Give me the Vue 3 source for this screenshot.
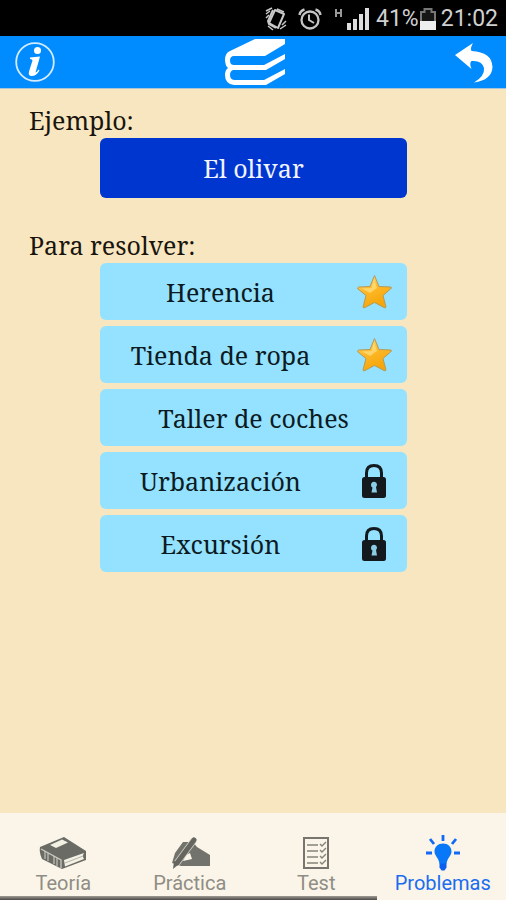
<script setup>
import { ref } from 'vue'

const problems = [
  { name: 'Herencia', state: 'star' },
  { name: 'Tienda de ropa', state: 'star' },
  { name: 'Taller de coches', state: 'open' },
  { name: 'Urbanización', state: 'lock' },
  { name: 'Excursión', state: 'lock' },
]
const tabs = ['Teoría', 'Práctica', 'Test', 'Problemas']
const current = ref('Problemas')
</script>

<template>
  <div class="screen">
    <div class="status">
      <svg width="22" height="24" viewBox="0 0 22 24" fill="none" stroke="#c9c9c9">
        <path d="M10 3 19 7 13 21 4 16Z" stroke-width="2" stroke-linejoin="round" />
        <path d="M8 3 3 14 4 17 11 21" stroke-width="2" />
        <path d="M7 1 1 4M5 4 1 7M4 8 1 11M21 14 17 18M21 18 15 22M3 19 8 23M12 2 19 5" stroke-width="1.500" />
      </svg>
      <svg class="alarm" width="24" height="24" viewBox="0 0 24 24" fill="none" stroke="#c4c4c4">
        <circle cx="12" cy="13" r="8.500" stroke-width="2.300" />
        <path d="M11 7.500V13L16 16" stroke-width="2" />
        <path d="M1.500 8Q2 4 6.500 2.500M22.500 8Q22 4 17.500 2.500" stroke-width="2.400" />
      </svg>
      <svg class="signal" width="36" height="24" viewBox="0 0 36 24">
        <path d="M2 2V10M7 2V10M2 6H7" fill="none" stroke="#999" stroke-width="2" />
        <path d="M13 16h4v7h-4zM19 12h4v11h-4zM25 7h4v16h-4zM31 1h4v22h-4z" fill="#ddd" />
      </svg>
      <span>41%</span>
      <svg width="18" height="24" viewBox="0 0 18 24">
        <path d="M5.500 2h7v3H16v17H2V5h3.500z" fill="#161616" stroke="#777" stroke-width="2" />
        <path d="M1 14h16v9H1z" fill="#eee" />
      </svg>
      <span class="clock">21:02</span>
    </div>

    <header class="bar">
      <button class="plain" aria-label="Información">
        <svg width="42" height="42" viewBox="0 0 42 42">
          <circle cx="21" cy="21" r="18.800" fill="none" stroke="#d5ecff" stroke-width="1.800" />
          <circle cx="23.500" cy="9.500" r="3.500" fill="#fff" />
          <path d="M16 16.500 26 15.500 21.500 31.500Q23 31 24.500 28.500L25.500 29.500Q22 35.500 17 35Q14 34.500 15 30.500L18.500 19.500Q18.500 18 16 18Z" fill="#fff" />
        </svg>
      </button>
      <svg width="62" height="48" viewBox="0 0 62 48">
        <path
          d="M6 13 31 1H61V6L41 18H10Q6 18 6 22.500Q6 27 10 27H40L61 16V21L42 32H9Q6 33 6 37Q6 42 11 42H40L61 31V36L42 47H10Q1 46 1 37Q1 32 4 30Q1 27 1 22Q1 15 6 13Z"
          fill="#fff"
        />
      </svg>
      <button class="plain" aria-label="Volver">
        <svg width="40" height="42" viewBox="0 0 40 42">
          <path d="M1 14 19 2Q16 7 17.500 10Q38 11 38.500 26Q38 39 20 41.500Q31 35 30 27Q28 19 17.500 20Q15 22 17.500 28Z" fill="#fff" />
        </svg>
      </button>
    </header>

    <main class="content">
      <h2>Ejemplo:</h2>
      <button class="example">El olivar</button>
      <h2 class="second">Para resolver:</h2>
      <ul class="list">
        <li v-for="p in problems" :key="p.name">
          <button class="problem" :class="{ full: p.state === 'open' }">
            <span>{{ p.name }}</span>
            <svg v-if="p.state === 'star'" width="36" height="36" viewBox="0 0 36 36">
              <defs>
                <linearGradient id="gold" x1="0" y1="0" x2="0.400" y2="1">
                  <stop offset="0" stop-color="#ffe071" />
                  <stop offset="0.500" stop-color="#fdb827" />
                  <stop offset="1" stop-color="#f5a60a" />
                </linearGradient>
              </defs>
              <path d="M18.500 1.500 23 12.500 35 13Q36 14 34.500 15L27 21.500 30 33Q29.500 34.500 28 33.500L18.500 28.500 9 33.500Q7 34.500 7 33L10 21.500 2 15Q1 13.500 2.500 13L14 12.500Z" fill="url(#gold)" stroke="#b39a5c" stroke-width="1" stroke-linejoin="round" />
              <path d="M18 5 15.500 14 6 14.500 14 19 21 14Z" fill="#ffe48c" opacity="0.650" />
            </svg>
            <svg v-else-if="p.state === 'lock'" width="26" height="36" viewBox="0 0 26 36">
              <path d="M5.500 16V10Q5.500 2.500 13 2.500T20.500 10V16" fill="none" stroke="#14191d" stroke-width="3" />
              <rect x="1" y="14" width="24" height="21" rx="2.500" fill="#14191d" />
              <path d="M10 22a3 3 0 1 1 5 2l1 5.500h-5.500l1-5Q10 24 10 22" fill="#8bcde5" />
            </svg>
          </button>
        </li>
      </ul>
    </main>

    <nav class="tabs">
      <button v-for="t in tabs" :key="t" class="tab" :class="{ active: t === current }" @click="current = t">
        <svg v-if="t === 'Teoría'" width="48" height="36" viewBox="0 0 48 36">
          <path d="M1 12 25 2 47 16V25L23 34 3 24Q0 17 1 12Z" fill="#6b6b66" />
          <path d="M11 10 23 4.500 29 7.500 17 13Z" fill="#f3f0e4" />
          <path d="M25 25 45 18Q43 21 45 24L26 31.500Z" fill="#f3f0e4" />
          <path d="M2 14 22 25V33" fill="none" stroke="#c9c6bc" stroke-width="1.300" />
          <path d="M6 16V24M9 18V26M15 21V29M18 23V31" fill="none" stroke="#d8d5ca" stroke-width="1" />
          <path d="M26 28 44 21" stroke="#b5b3aa" stroke-width="1" />
        </svg>
        <svg v-else-if="t === 'Práctica'" width="42" height="36" viewBox="0 0 42 36">
          <path d="M14 7 24 7 28 12 41 20V31H12L3 28 6 18Z" fill="#73736d" />
          <path d="M17 20 21 18 23 24 14 26Z" fill="#faf5e8" />
          <path d="M25 5 8 28" stroke="#d6d2c6" stroke-width="6.500" />
          <path d="M25 5 8 28" stroke="#666661" stroke-width="5" stroke-linecap="round" />
          <path d="M5 26 10 29 4 34Z" fill="#666661" />
        </svg>
        <svg v-else-if="t === 'Test'" width="28" height="36" viewBox="0 0 28 36">
          <rect x="2" y="3" width="24" height="30" fill="#faf5e8" stroke="#77756d" stroke-width="2" />
          <path d="M5 10H16M5 16H16M5 22H16M5 28H16" stroke="#85837a" stroke-width="1.700" />
          <path d="M18 9 20 11 24 7M18 15 20 17 24 13M18 21 20 23 24 19M18 27 20 29 24 25" fill="none" stroke="#85837a" stroke-width="1.400" />
        </svg>
        <svg v-else width="36" height="36" viewBox="0 0 36 36">
          <path d="M18 8.500C13 8.500 9.500 12 9.500 16.500C9.500 21 14 23 14.500 29H21.500C22 23 26.500 21 26.500 16.500C26.500 12 23 8.500 18 8.500Z" fill="#0878f8" />
          <path d="M14.500 28.500h7v4l-2 3h-3l-2-3z" fill="#0b5ff0" />
          <path d="M18 0V6M5 4 9 9M31 4 27 9M1 18H7M29 18H35" stroke="#1269f5" stroke-width="2.800" />
        </svg>
        <span>{{ t }}</span>
      </button>
      <div class="progress"></div>
    </nav>
  </div>
</template>

<style>
body {
  margin: 0;
}
</style>

<style scoped>
.screen {
  display: flex;
  flex-direction: column;
  min-height: 100vh;
  background: #f8e6c0;
}
button {
  border: 0;
  padding: 0;
  cursor: pointer;
}
svg {
  display: block;
  flex: none;
}
.status {
  display: flex;
  align-items: center;
  justify-content: flex-end;
  box-sizing: border-box;
  height: 36px;
  padding: 2px 8px 0 0;
  background: #000;
  color: #d0d0d0;
  font: 23px/34px Roboto, sans-serif;
}
.alarm {
  margin-left: 11px;
}
.signal {
  margin: 0 6px 0 12px;
}
.clock {
  margin-left: 4px;
}
.bar {
  display: flex;
  align-items: center;
  justify-content: space-between;
  height: 52px;
  padding: 0 12px 0 14px;
  background: #008cff;
  border-bottom: 1px solid #a9c4d4;
}
.plain {
  background: none;
}
.content {
  flex: 1;
  padding: 15px 99px 24px 100px;
  font-family: "Noto Serif", "Droid Serif", "DejaVu Serif Condensed", "DejaVu Serif", serif;
  font-size: 25px;
}
h2 {
  margin: 0 0 0 -71px;
  padding-bottom: 1px;
  font-size: 25px;
  font-weight: 400;
  line-height: 33px;
  color: #18150f;
}
.second {
  margin-top: 31px;
}
.example {
  display: block;
  width: 100%;
  height: 60px;
  border-radius: 6px;
  background: #0036d0;
  color: #f2f4ff;
  font: inherit;
}
.list {
  display: grid;
  gap: 6px;
  margin: 0;
  padding: 0;
  list-style: none;
}
.problem {
  display: grid;
  grid-template-columns: 1fr 66px;
  align-items: center;
  justify-items: center;
  width: 100%;
  height: 57px;
  border-radius: 6px;
  background: #94e2ff;
  color: #0c1a22;
  font: inherit;
}
.full {
  grid-template-columns: 1fr;
}
.tabs {
  display: grid;
  grid-template-columns: repeat(4, 1fr);
  padding-top: 22px;
  background: #faf5e8;
}
.tab {
  display: flex;
  flex-direction: column;
  align-items: center;
  background: none;
  color: #8f8d85;
  font: 20px/24px Roboto, sans-serif;
  padding-bottom: 1px;
}
.active {
  color: #1a6cf0;
}
.progress {
  grid-column: 1 / 4;
  height: 4px;
  margin-right: 3px;
  background: linear-gradient(#a09d96, #4a4846);
}
</style>
